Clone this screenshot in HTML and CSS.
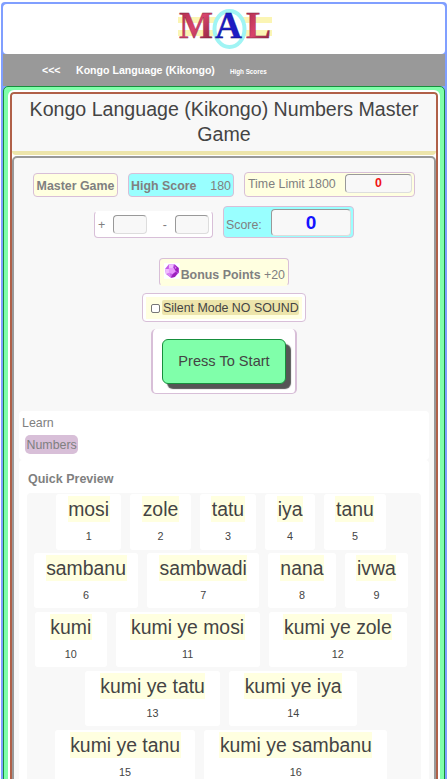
FILE: index.html
```html
<!DOCTYPE html>
<html lang="en">
<head>
  <meta charset="UTF-8">
  <meta name="viewport" content="width=device-width, initial-scale=1.0">
  <title>Kongo Language (Kikongo) Numbers Master Game</title>
  <link rel="stylesheet" href="styles.css">
</head>
<body>
  <div class="page">
    <header class="logo">
      <svg width="96" height="44" viewBox="0 0 96 44">
        <defs>
          <linearGradient id="red" x1="0" y1="0" x2="1" y2="1">
            <stop offset="0" stop-color="#a82848"/>
            <stop offset="0.5" stop-color="#d8446c"/>
            <stop offset="1" stop-color="#7c1c34"/>
          </linearGradient>
        </defs>
        <path d="M1 11h94v6H1zM1 24h94v6H1z" fill="#fbf5b4"/>
        <ellipse cx="52.5" cy="23" rx="15" ry="18" fill="#fff" stroke="#a0f4f4" stroke-width="4"/>
        <g class="logo-text" stroke-width="0.3">
          <text x="2" y="32" textLength="34" lengthAdjust="spacingAndGlyphs" fill="url(#red)" stroke="#7c2038">M</text>
          <text x="38" y="32" textLength="27" lengthAdjust="spacingAndGlyphs" fill="#1c1cc4" stroke="#0c0c70">A</text>
          <text x="69" y="32" textLength="25" lengthAdjust="spacingAndGlyphs" fill="url(#red)" stroke="#7c2038">L</text>
        </g>
      </svg>
    </header>

    <nav class="nav">
      <a class="back">&lt;&lt;&lt;</a>
      <a>Kongo Language (Kikongo)</a>
      <a class="scores">High Scores</a>
    </nav>

    <main class="green">
      <div class="brown">
        <h1 class="title">Kongo Language (Kikongo) Numbers Master Game</h1>

        <div class="game">
          <div class="row row-top">
            <div class="box master"><b>Master Game</b></div>
            <div class="box high"><b>High Score</b><span>180</span></div>
            <div class="box time"><span>Time Limit 1800</span><span class="field red">0</span></div>
          </div>

          <div class="row row-score">
            <div class="box counts">
              <span>+</span><span class="field"></span>
              <span class="minus">-</span><span class="field"></span>
            </div>
            <div class="box score"><span>Score:</span><span class="field blue">0</span></div>
          </div>

          <div class="box bonus">
            <svg width="16" height="16" viewBox="0 0 16 16">
              <path d="M0 0h16v16H0z" fill="#fff"/>
              <path d="M5 1h6l4 4v5l-4 4-4 1-5-4-1-5z" fill="#c45ce8"/>
              <path d="M5 1h5l-1 4-4 1zM1 6l4 0 1 4-4 1z" fill="#f0bcff"/>
              <path d="M5 5h5l2 3-3 3-4-1z" fill="#e898fc"/>
              <path d="M11 2l4 3v5l-3-2-2-3zM9 11l3-2 2 1-3 4-4 1z" fill="#9c20bc"/>
              <path d="M3 11l3-1 1 5zM11 3l2 2-2 1z" fill="#d884f4"/>
            </svg>
            <b>Bonus Points</b>&nbsp;+20
          </div>

          <div class="box silent">
            <label><input type="checkbox"><span>Silent Mode NO SOUND</span></label>
          </div>

          <div class="box start">
            <button>Press To Start</button>
          </div>

          <section class="learn">
            <p>Learn</p>
            <a class="tag">Numbers</a>
          </section>

          <section class="preview">
            <h2>Quick Preview</h2>
            <div class="words">
              <div class="card"><span>mosi</span><small>1</small></div>
              <div class="card"><span>zole</span><small>2</small></div>
              <div class="card"><span>tatu</span><small>3</small></div>
              <div class="card"><span>iya</span><small>4</small></div>
              <div class="card"><span>tanu</span><small>5</small></div>
              <div class="card"><span>sambanu</span><small>6</small></div>
              <div class="card"><span>sambwadi</span><small>7</small></div>
              <div class="card"><span>nana</span><small>8</small></div>
              <div class="card"><span>ivwa</span><small>9</small></div>
              <div class="card wide"><span>kumi</span><small>10</small></div>
              <div class="card wide"><span>kumi ye mosi</span><small>11</small></div>
              <div class="card wide"><span>kumi ye zole</span><small>12</small></div>
              <div class="card wide"><span>kumi ye tatu</span><small>13</small></div>
              <div class="card wide"><span>kumi ye iya</span><small>14</small></div>
              <div class="card wide"><span>kumi ye tanu</span><small>15</small></div>
              <div class="card wide"><span>kumi ye sambanu</span><small>16</small></div>
            </div>
          </section>
        </div>
      </div>
    </main>
  </div>
</body>
</html>
```

FILE: styles.css
```css
* {
  margin: 0;
  padding: 0;
  box-sizing: border-box;
}
body {
  width: 448px;
  height: 779px;
  overflow: hidden;
  padding: 2px 1px 0;
  background: #fff;
  color: #808080;
  font-family: "Liberation Sans", Arial, sans-serif;
  font-size: 12.4px;
}
.page {
  height: 777px;
  overflow: hidden;
  border: 2px solid #809fff;
  border-bottom: 0;
  border-radius: 4px 4px 0 0;
  background: #809fff;
}
.logo {
  height: 50px;
  padding: 2px 0 0 174px;
  background: #fff;
  border-radius: 4px;
}
.logo svg {
  display: block;
}
.logo-text {
  font-family: "Liberation Serif", serif;
  font-weight: bold;
  font-size: 37px;
}
.nav {
  display: flex;
  align-items: center;
  height: 32px;
  padding-left: 39px;
  background: #999;
  color: #fff;
  font-weight: bold;
  font-size: 10.6px;
}
.nav .back {
  width: 34px;
}
.nav .scores {
  margin: 2px 0 0 15px;
  font-size: 6.3px;
}

/* nested frames */
.green {
  padding: 3px 4px;
  border: 1px solid #168f3c;
  border-radius: 5px;
  background: #80ffaa;
}
.brown {
  border: 2px solid #b06048;
  outline: 2px solid #fff;
  outline-offset: 0;
  margin: 2px;
  border-radius: 4px;
  background: #fff;
}
.title {
  height: 61px;
  padding: 3px 10px 0;
  border-bottom: 4px solid #ede5ab;
  border-radius: 4px;
  background: #f8f8f8;
  color: #444;
  font-size: 19.6px;
  font-weight: normal;
  line-height: 25px;
  text-align: center;
}
.game {
  display: flex;
  flex-direction: column;
  align-items: center;
  height: 680px;
  margin-top: 1px;
  border: 2px solid #999;
  border-radius: 5px;
  background: #f8f8f8;
}

.row {
  display: flex;
  align-items: flex-end;
  gap: 10px;
}
.row-top {
  margin-top: 14px;
}
.row-score {
  margin-top: 9px;
}
.box {
  display: flex;
  align-items: center;
  border: 1px solid #d8bfd8;
  border-radius: 4px;
  background: #ffffe0;
  white-space: nowrap;
}
.master {
  width: 85px;
  height: 24px;
  padding-top: 1px;
  justify-content: center;
}
.high {
  width: 106px;
  height: 24px;
  padding: 1px 2px 0;
  justify-content: space-between;
  background: #9ff;
}
.time {
  width: 171px;
  height: 25px;
  padding: 0 2px 2px 3px;
  justify-content: space-between;
}
.counts {
  width: 119px;
  height: 27px;
  padding: 0 3px;
  border-top-color: #fff;
  background: #fff;
  justify-content: space-between;
}
.counts .minus {
  margin-left: 7px;
}
.score {
  width: 131px;
  height: 32px;
  padding: 0 2px;
  background: #9ff;
  justify-content: space-between;
}
.score span:first-child {
  margin-top: 5px;
}
.field {
  display: inline-block;
  width: 34px;
  height: 19px;
  border: 1px solid #ddd;
  border-top-color: #999;
  border-left-color: #999;
  border-radius: 4px;
  background: #f8f8f8;
  font-weight: bold;
  text-align: center;
}
.field.red {
  width: 67px;
  color: #f01414;
  font-size: 12.4px;
  line-height: 17px;
}
.field.blue {
  width: 80px;
  height: 27px;
  color: #1414ff;
  font-size: 19px;
  line-height: 26px;
}
.bonus {
  width: 130px;
  height: 28px;
  margin-top: 20px;
  padding: 5px 3px 0 4px;
  border-bottom-color: #ffffe0;
}
.bonus svg {
  margin: -8px 1px 0 0;
}
.silent {
  width: 164px;
  height: 29px;
  margin-top: 7px;
  padding: 3px;
  background: #fff;
}
.silent label {
  display: flex;
  align-items: center;
  width: 156px;
  height: 22px;
  padding-left: 5px;
  background: #ffffe0;
  color: #444;
}
.silent input {
  width: 9px;
  height: 9px;
  margin: 2px 2px 0 0;
  appearance: none;
  border: 1px solid #767676;
  border-radius: 2px;
  background: #fff;
}
.silent span {
  height: 15px;
  padding-left: 1px;
  line-height: 16px;
  border-radius: 2px;
  background: #ede5ab;
}
.start {
  width: 146px;
  height: 65px;
  margin-top: 7px;
  padding-left: 9px;
  border-width: 0 2px 1px;
  border-radius: 5px;
  background: #fff;
}
.start button {
  width: 124px;
  height: 45px;
  border: 1px solid #168f3c;
  border-radius: 6px;
  background: #80ffaa;
  box-shadow: 5px 5px 1px #555;
  color: #444;
  font-family: inherit;
  font-size: 14.6px;
}

.learn {
  width: 410px;
  height: 49px;
  margin-top: 17px;
  padding: 4px 3px;
  border-radius: 4px;
  background: #fff;
}
.learn p {
  line-height: 16px;
}
.tag {
  display: inline-block;
  height: 19px;
  margin: 4px 0 0 3px;
  padding: 0 1.5px;
  border-radius: 5px;
  background: #d8bfd8;
  line-height: 20px;
}
.preview {
  width: 410px;
  height: 360px;
  padding: 11px 8px 0;
  border-radius: 4px;
  background: #fff;
}
.preview h2 {
  height: 22px;
  padding-left: 1px;
  font-size: 12.5px;
  line-height: 16px;
}
.words {
  display: flex;
  flex-wrap: wrap;
  justify-content: center;
  gap: 3.4px 9px;
  padding: 1px 6px 0 0;
  border-radius: 4px;
  background: #f8f8f8;
  color: #444;
}
.card {
  display: flex;
  flex-direction: column;
  align-items: center;
  height: 55.5px;
  padding: 2px 11.7px 0;
  border-radius: 3px;
  background: #fff;
}
.card.wide {
  padding: 2px 14.8px 0;
}
.card span {
  height: 26px;
  padding: 0 0.6px;
  background: #ffffe0;
  font-size: 19.4px;
  line-height: 27px;
  white-space: nowrap;
}
.card small {
  margin-top: 8px;
  font-size: 10.8px;
  line-height: 13px;
}
```
